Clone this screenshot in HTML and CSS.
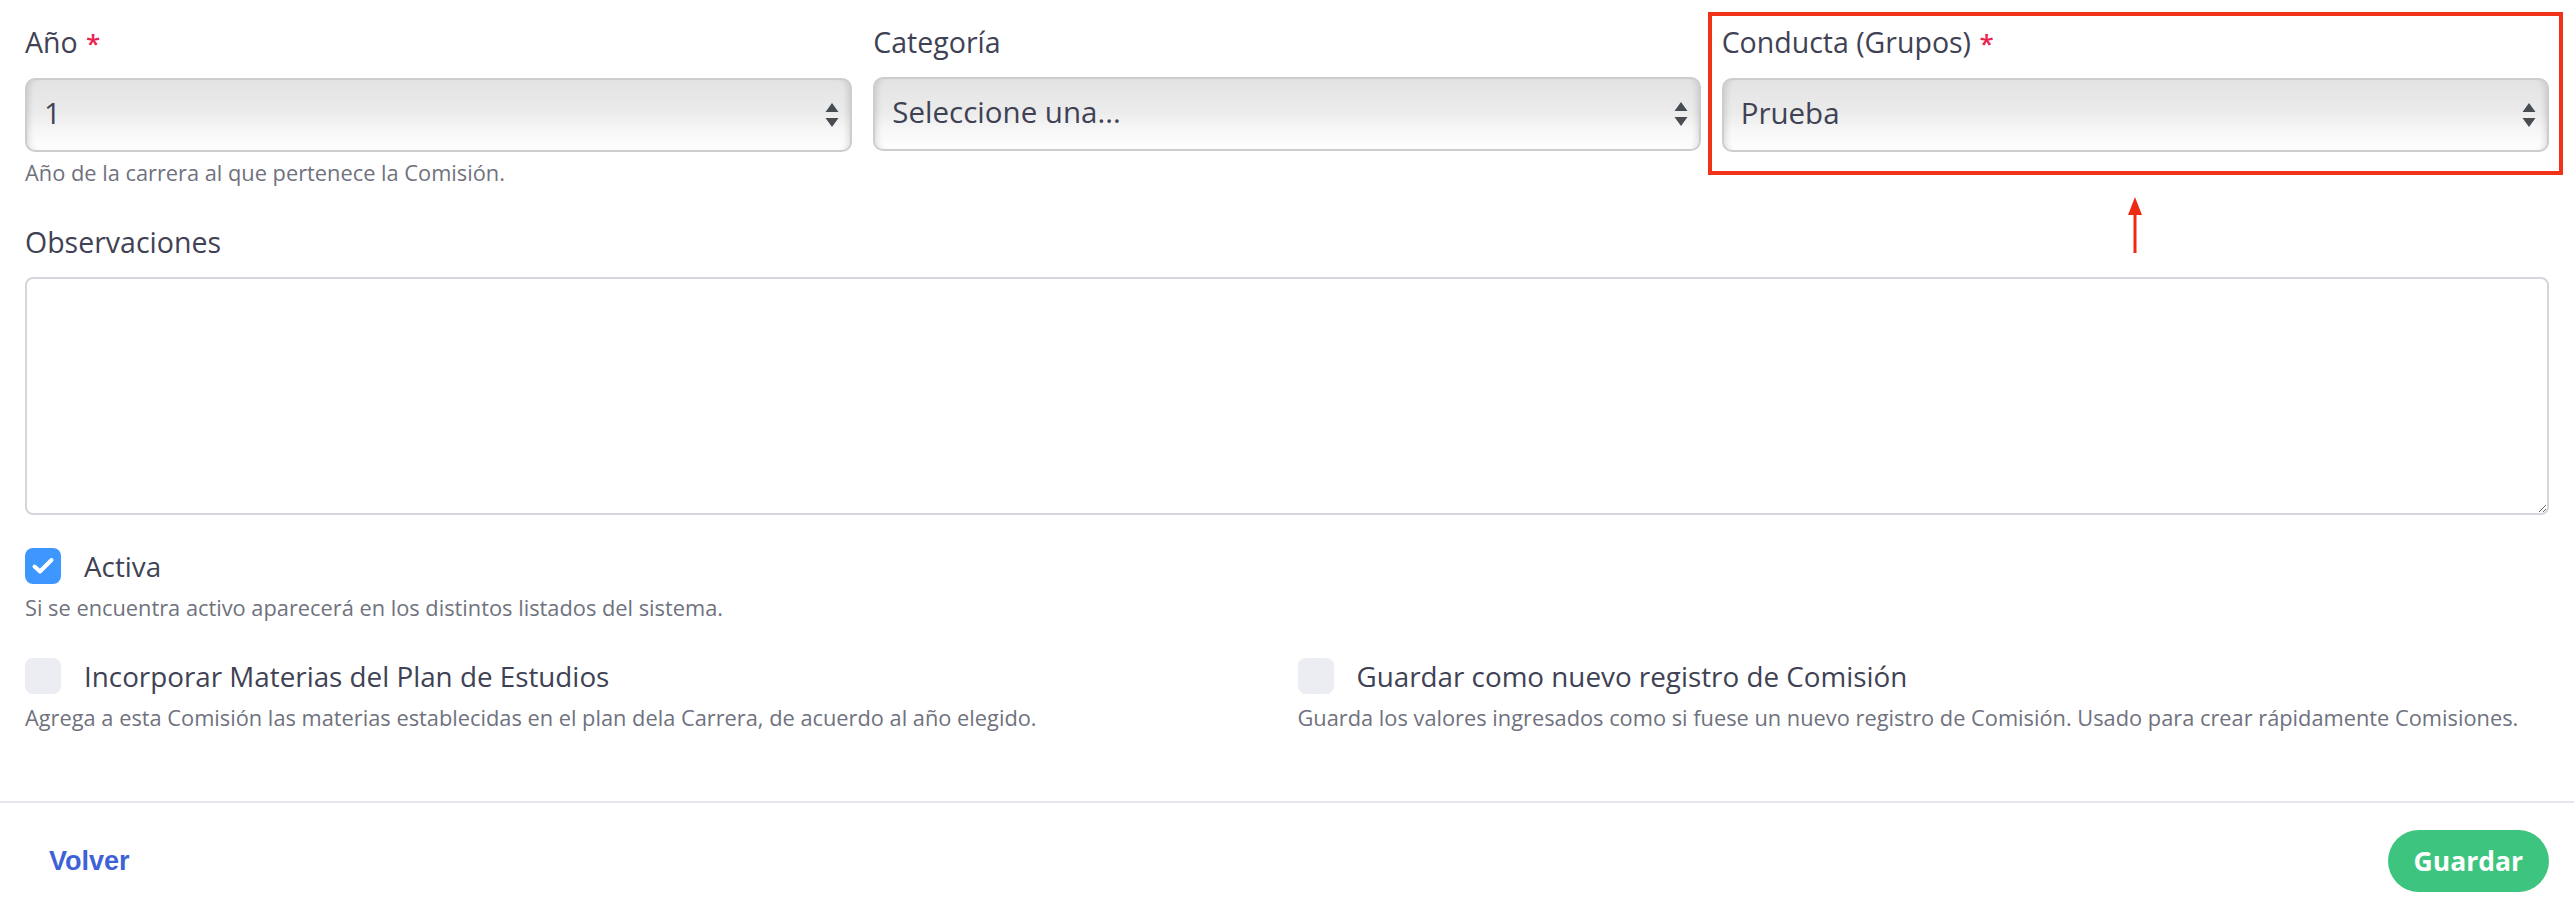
FILE: index.html
```html
<!DOCTYPE html>
<html lang="es">
<head>
<meta charset="UTF-8">
<meta name="viewport" content="width=device-width, initial-scale=1.0">
<title>Comisión</title>
<link rel="stylesheet" href="styles.css">
</head>
<body>

<form class="card-form">
    <div class="form-body">
        <div class="row-3">
            <div class="field">
                <label class="form-label" for="anio">Año <span class="req">*</span></label>
                <div class="select-wrap">
                    <select id="anio" class="form-select">
                        <option>1</option>
                        <option>2</option>
                        <option>3</option>
                    </select>
                    <svg class="select-arrow" width="14" height="24" viewBox="0 0 14 24"><path d="M7 0 L13.5 9 L0.5 9 Z M7 24 L13.5 15 L0.5 15 Z" fill="#484d54"/></svg>
                </div>
                <div class="form-text">Año de la carrera al que pertenece la Comisión.</div>
            </div>

            <div class="field">
                <label class="form-label" for="categoria">Categoría</label>
                <div class="select-wrap">
                    <select id="categoria" class="form-select">
                        <option>Seleccione una...</option>
                    </select>
                    <svg class="select-arrow" width="14" height="24" viewBox="0 0 14 24"><path d="M7 0 L13.5 9 L0.5 9 Z M7 24 L13.5 15 L0.5 15 Z" fill="#484d54"/></svg>
                </div>
            </div>

            <div class="field highlighted">
                <label class="form-label" for="conducta">Conducta (Grupos) <span class="req">*</span></label>
                <div class="select-wrap">
                    <select id="conducta" class="form-select">
                        <option>Prueba</option>
                    </select>
                    <svg class="select-arrow" width="14" height="24" viewBox="0 0 14 24"><path d="M7 0 L13.5 9 L0.5 9 Z M7 24 L13.5 15 L0.5 15 Z" fill="#484d54"/></svg>
                </div>
                <!-- annotation -->
                <div class="mark-box"></div>
                <svg class="mark-arrow" width="20" height="56" viewBox="0 0 20 56">
                    <path d="M10 0 L17 18 L3 18 Z" fill="#ee2a12"/>
                    <line x1="10" y1="14" x2="10" y2="56" stroke="#ee2a12" stroke-width="3"/>
                </svg>
            </div>
        </div>

        <div class="field obs">
            <label class="form-label" for="obs">Observaciones</label>
            <textarea id="obs" class="form-textarea"></textarea>
        </div>

        <div class="check-field first">
            <label class="check">
                <span class="check-box checked">
                    <svg width="24" height="20" viewBox="0 0 24 20"><path d="M3.5 10.5 L9 15.5 L20.5 4" fill="none" stroke="#fff" stroke-width="4" stroke-linecap="round" stroke-linejoin="round"/></svg>
                </span>
                <span class="check-label">Activa</span>
            </label>
            <div class="form-text">Si se encuentra activo aparecerá en los distintos listados del sistema.</div>
        </div>

        <div class="row-2">
            <div class="check-field">
                <label class="check">
                    <span class="check-box"></span>
                    <span class="check-label">Incorporar Materias del Plan de Estudios</span>
                </label>
                <div class="form-text">Agrega a esta Comisión las materias establecidas en el plan dela Carrera, de acuerdo al año elegido.</div>
            </div>
            <div class="check-field">
                <label class="check">
                    <span class="check-box"></span>
                    <span class="check-label">Guardar como nuevo registro de Comisión</span>
                </label>
                <div class="form-text">Guarda los valores ingresados como si fuese un nuevo registro de Comisión. Usado para crear rápidamente Comisiones.</div>
            </div>
        </div>
    </div>

    <div class="form-footer">
        <a href="#" class="btn-back">Volver</a>
        <button type="button" class="btn-save">Guardar</button>
    </div>
</form>

</body>
</html>
```

FILE: styles.css
```css
body {
    margin: 0;
    background: #fff;
    font-family: "Open Sans", Arial, sans-serif;
    color: #3f4254;
}

.card-form {
    margin: 0;
}

.form-body {
    padding: 20px 25px 0 25px;
}

.row-3 {
    display: grid;
    grid-template-columns: repeat(3, 1fr);
    column-gap: 21px;
}

.row-2 {
    display: grid;
    grid-template-columns: repeat(2, 1fr);
    column-gap: 21px;
    margin-top: 34px;
}

.field {
    display: flex;
    flex-direction: column;
}

.form-label {
    font-size: 28.5px;
    line-height: 44px;
    color: #3f4254;
    margin-bottom: 13px;
}

.req {
    color: #e8234f;
    font-size: 26px;
    font-weight: 600;
    margin-left: 1px;
}

.select-wrap {
    position: relative;
}

.form-select {
    -webkit-appearance: none;
    appearance: none;
    width: 100%;
    height: 74px;
    margin: 0;
    padding: 0 50px 5px 17px;
    border: 2px solid #cdcdcd;
    border-radius: 10px;
    font-family: inherit;
    font-size: 29.5px;
    color: #3f4254;
    background: linear-gradient(#e3e3e3, #ebebeb 45%, #f8f8f8 75%, #fefefe);
    box-shadow: inset 7px 0 6px -5px rgba(0,0,0,0.13), inset -7px 0 6px -5px rgba(0,0,0,0.13);
    outline: none;
}

.select-arrow {
    position: absolute;
    right: 13px;
    top: 25px;
    pointer-events: none;
}

.form-text {
    font-size: 21.8px;
    line-height: 32px;
    color: #6f727e;
    margin-top: 5px;
}

/* red annotation round the third select */
.highlighted {
    position: relative;
}

.mark-box {
    position: absolute;
    left: -14px;
    right: -14px;
    top: -8px;
    bottom: 14px;
    border: 4px solid #ef3218;
    pointer-events: none;
}

.mark-arrow {
    position: absolute;
    top: 177px;
    left: 50%;
    margin-left: -10px;
}

.obs {
    margin-top: 31px;
}

.form-textarea {
    box-sizing: border-box;
    width: 100%;
    height: 238px;
    margin: 0;
    border: 2px solid #d3d6db;
    border-radius: 8px;
    font-family: inherit;
    font-size: 28px;
    resize: vertical;
    outline: none;
    display: block;
}

.check-field.first {
    margin-top: 33px;
}

.check-field .form-text {
    margin-top: 8px;
}

.check {
    display: flex;
    align-items: center;
    gap: 23px;
    cursor: pointer;
}

.check-box {
    width: 36px;
    height: 36px;
    border-radius: 8px;
    background: #ebedf3;
    display: flex;
    align-items: center;
    justify-content: center;
    flex-shrink: 0;
}

.check-box.checked {
    background: #3e97ff;
}

.check-label {
    font-size: 27.8px;
    line-height: 36px;
    color: #3f4254;
}

.form-footer {
    margin-top: 67px;
    border-top: 2px solid #e4e7ee;
    padding: 27px 25px 21px 49px;
    display: flex;
    justify-content: space-between;
    align-items: center;
}

.btn-back {
    font-family: "Liberation Sans", Arial, sans-serif;
    font-weight: bold;
    font-size: 27px;
    color: #3d63d6;
    text-decoration: none;
}

.btn-save {
    height: 62px;
    padding: 0 26px;
    border: none;
    border-radius: 31px;
    background: #3dc47e;
    color: #fff;
    font-family: "Open Sans", Arial, sans-serif;
    font-weight: 700;
    font-size: 26.5px;
    cursor: pointer;
}
```
